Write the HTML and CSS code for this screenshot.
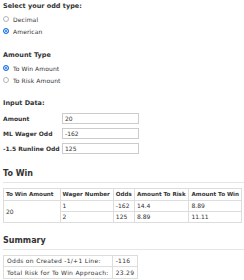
FILE: index.html
```html
<!DOCTYPE html>
<html lang="en">
<head>
  <meta charset="UTF-8">
  <title>Odds Calculator</title>
  <link rel="stylesheet" href="styles.css">
</head>
<body>
  <div class="calc">
    <div class="group">
      <div class="group-title">Select your odd type:</div>
      <label class="radio"><input type="radio" name="odd-type"> Decimal</label>
      <label class="radio"><input type="radio" name="odd-type" checked> American</label>
    </div>

    <div class="group">
      <div class="group-title">Amount Type</div>
      <label class="radio"><input type="radio" name="amount-type" checked> To Win Amount</label>
      <label class="radio"><input type="radio" name="amount-type"> To Risk Amount</label>
    </div>

    <div class="group">
      <div class="group-title inputs-title">Input Data:</div>
      <div class="input-row">
        <label class="input-label">Amount</label>
        <input class="input-box" type="text" value="20">
      </div>
      <div class="input-row">
        <label class="input-label">ML Wager Odd</label>
        <input class="input-box" type="text" value="-162">
      </div>
      <div class="input-row">
        <label class="input-label">-1.5 Runline Odd</label>
        <input class="input-box" type="text" value="125">
      </div>
    </div>

    <h3 class="section-title">To Win</h3>
    <table class="result-table">
      <thead>
        <tr>
          <th class="col-amount">To Win Amount</th>
          <th class="col-wager">Wager Number</th>
          <th class="col-odds">Odds</th>
          <th class="col-risk">Amount To Risk</th>
          <th>Amount To Win</th>
        </tr>
      </thead>
      <tbody>
        <tr>
          <td rowspan="2">20</td>
          <td>1</td>
          <td>-162</td>
          <td>14.4</td>
          <td>8.89</td>
        </tr>
        <tr>
          <td>2</td>
          <td>125</td>
          <td>8.89</td>
          <td>11.11</td>
        </tr>
      </tbody>
    </table>

    <h3 class="section-title summary-title">Summary</h3>
    <table class="summary-table">
      <tr>
        <td>Odds on Created -1/+1 Line:</td>
        <td>-116</td>
      </tr>
      <tr>
        <td>Total Risk for To Win Approach:</td>
        <td>23.29</td>
      </tr>
    </table>
  </div>
</body>
</html>
```

FILE: styles.css
```css
body {
  margin: 0;
  background: #fff;
  color: #333;
  font-family: "DejaVu Sans", Verdana, sans-serif;
  font-size: 6px;
}
.calc {
  padding: 2px 0 0 3px;
}
.group {
  display: flex;
  flex-direction: column;
  margin-bottom: 14px;
}
.group + .group {
  margin-bottom: 13px;
}
.group-title {
  font-size: 6.5px;
  font-weight: bold;
  line-height: 8px;
  margin-bottom: 3px;
}
.inputs-title {
  margin-bottom: 4px;
}
.radio {
  display: flex;
  align-items: center;
  gap: 4px;
  height: 12px;
  letter-spacing: 0.1px;
}
.radio input {
  appearance: none;
  -webkit-appearance: none;
  margin: 0;
  width: 6px;
  height: 6px;
  border: 1px solid #b5b5b5;
  border-radius: 50%;
  box-sizing: border-box;
  background: #fff;
}
.radio input:checked {
  border-color: #1a73e8;
  background: #1a73e8;
  box-shadow: inset 0 0 0 1px #fff;
}
.input-row {
  display: flex;
  align-items: center;
  height: 15px;
}
.input-label {
  font-weight: bold;
  width: 59px;
}
.input-box {
  width: 77px;
  height: 11px;
  box-sizing: border-box;
  border: 1px solid #ccc;
  padding: 0 2px;
  margin: 0;
  font-family: inherit;
  font-size: 6px;
  color: #333;
  outline: none;
}
.section-title {
  margin: 12px 0 5px 0;
  padding-bottom: 3px;
  font-size: 8px;
  line-height: 10px;
  font-weight: bold;
  border-bottom: 1px solid #e5e5e5;
}
.summary-title {
  margin-top: 13px;
}
.result-table,
.summary-table {
  border-collapse: collapse;
}
.result-table {
  width: 239px;
}
.result-table th,
.result-table td,
.summary-table td {
  border: 1px solid #ddd;
  padding: 2px 2px;
  line-height: 6px;
  text-align: left;
  white-space: nowrap;
}
.result-table th {
  font-size: 5.6px;
  line-height: 7px;
}
.col-amount { width: 54px; }
.col-wager { width: 49px; }
.col-odds { width: 16px; }
.col-risk { width: 50px; }
.summary-table td {
  padding: 2px 3px;
  letter-spacing: 0.3px;
}
.summary-table tr:last-child td {
  line-height: 7px;
}
```
